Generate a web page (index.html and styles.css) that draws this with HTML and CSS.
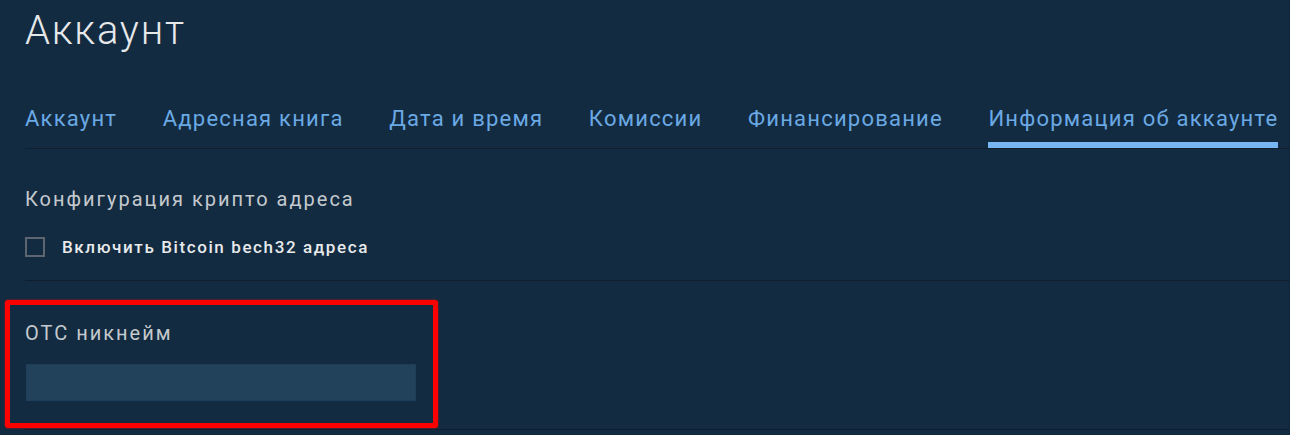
FILE: index.html
```html
<!DOCTYPE html>
<html lang="ru">
<head>
    <meta charset="UTF-8">
    <meta name="viewport" content="width=device-width, initial-scale=1.0">
    <title>Аккаунт</title>
    <link rel="stylesheet" href="styles.css">
</head>
<body>
    <div class="page">
        <h1 class="title">Аккаунт</h1>

        <nav class="tabs">
            <a class="tab">Аккаунт</a>
            <a class="tab">Адресная книга</a>
            <a class="tab">Дата и время</a>
            <a class="tab">Комиссии</a>
            <a class="tab">Финансирование</a>
            <a class="tab active">Информация об аккаунте</a>
        </nav>

        <section class="block block-crypto">
            <h2 class="block-title">Конфигурация крипто адреса</h2>
            <label class="check">
                <span class="check-box"></span>
                <span class="check-label">Включить Bitcoin bech32 адреса</span>
            </label>
        </section>

        <section class="block block-nick">
            <h2 class="block-title">ОТС никнейм</h2>
            <input class="field" type="text">
            <div class="highlight"></div>
        </section>
    </div>
</body>
</html>
```

FILE: styles.css
```css
body {
    margin: 0;
    background-color: #132b40;
    font-family: Roboto, "Liberation Sans", sans-serif;
    overflow: hidden;
}

.page {
    padding-left: 25px;
    border-right: 1px solid #0f2436;
    height: 435px;
}

.title {
    margin: 0;
    padding-top: 6px;
    font-size: 40px;
    font-weight: 300;
    line-height: 50px;
    letter-spacing: 1.8px;
    color: #e6e8ea;
}

.tabs {
    display: flex;
    gap: 45.6px;
    margin-top: 45px;
    border-bottom: 1px solid #0d1f2f;
}

.tab {
    font-size: 22px;
    line-height: 24px;
    letter-spacing: 1.22px;
    color: #6aa9e4;
    padding: 6px 0 11px;
    border-bottom: 6px solid transparent;
    white-space: nowrap;
}

.tab.active {
    border-bottom-color: #78b6f3;
}

.block {
    border-bottom: 1px solid #0d1f2f;
}

.block-title {
    margin: 0;
    font-size: 20px;
    font-weight: 400;
    line-height: 24px;
    letter-spacing: 2px;
    color: #c4c9ce;
}

.block-crypto {
    padding: 38px 0 23px;
}

.check {
    display: flex;
    align-items: center;
    margin-top: 26px;
}

.check-box {
    width: 16px;
    height: 16px;
    border: 2px solid #5d6670;
}

.check-label {
    margin-left: 17px;
    font-size: 17px;
    font-weight: 500;
    letter-spacing: 1.6px;
    color: #e8eaec;
}

.block-nick {
    position: relative;
    padding: 40px 0 28px;
}

.field {
    display: block;
    width: 390px;
    height: 37px;
    margin: 19px 0 0 1px;
    padding: 0;
    box-sizing: border-box;
    background-color: #22415b;
    border: 1px solid #1e3d59;
    outline: none;
}

.highlight {
    position: absolute;
    left: -20px;
    top: 19px;
    width: 433px;
    height: 128px;
    box-sizing: border-box;
    border: 5px solid #ff0000;
    border-radius: 3px;
    box-shadow: 0 0 2px #c0101a;
}
```
